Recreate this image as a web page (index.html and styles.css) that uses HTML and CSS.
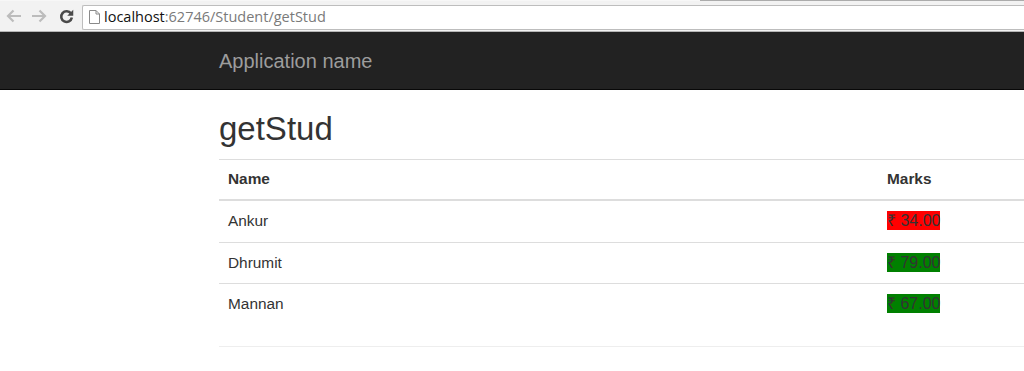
FILE: index.html
```html
<!DOCTYPE html>
<html lang="en">
<head>
    <meta charset="UTF-8">
    <meta name="viewport" content="width=device-width, initial-scale=1.0">
    <title>getStud - My ASP.NET Application</title>
    <link rel="stylesheet" href="styles.css">
</head>
<body>
    <div class="browser-bar">
        <div class="tab-edge"></div>
        <div class="toolbar">
            <span class="nav-btn disabled">
                <svg width="16" height="14" viewBox="0 0 16 14"><path d="M15 7H2.5M7.5 1.5L2 7l5.5 5.5" fill="none" stroke="currentColor" stroke-width="2.2"/></svg>
            </span>
            <span class="nav-btn disabled">
                <svg width="16" height="14" viewBox="0 0 16 14"><path d="M1 7h12.5M8.5 1.5L14 7l-5.5 5.5" fill="none" stroke="currentColor" stroke-width="2.2"/></svg>
            </span>
            <span class="nav-btn reload">
                <svg width="15" height="15" viewBox="0 0 14 14"><path d="M11.2 4.2A5 5 0 1 0 12 8" fill="none" stroke="currentColor" stroke-width="2.4"/><path d="M13.3 0.6V6.2H7.7z" fill="currentColor"/></svg>
            </span>
            <div class="omnibox">
                <svg class="page-icon" width="11" height="14" viewBox="0 0 11 14"><path d="M0.5 0.5h6.5l3.5 3.5v9.5h-10z M7 0.5v3.5h3.5" fill="#fff" stroke="#8a8a8a" stroke-width="1"/></svg>
                <span class="url"><span class="host">localhost</span>:62746/Student/getStud</span>
            </div>
        </div>
    </div>

    <div class="navbar">
        <a class="navbar-brand" href="#">Application name</a>
    </div>

    <div class="container body-content">
        <h2>getStud</h2>

        <table class="table">
            <thead>
                <tr>
                    <th class="col-name">Name</th>
                    <th>Marks</th>
                </tr>
            </thead>
            <tbody>
                <tr>
                    <td>Ankur</td>
                    <td><span class="mark low">₹ 34.00</span></td>
                </tr>
                <tr>
                    <td>Dhrumit</td>
                    <td><span class="mark high">₹ 79.00</span></td>
                </tr>
                <tr>
                    <td>Mannan</td>
                    <td><span class="mark high">₹ 67.00</span></td>
                </tr>
            </tbody>
        </table>

        <hr>
    </div>
</body>
</html>
```

FILE: styles.css
```css
* {
    margin: 0;
    padding: 0;
    box-sizing: border-box;
}

html, body {
    overflow: hidden;
}

body {
    font-family: 'Liberation Sans', Arial, sans-serif;
    font-size: 15.4px;
    line-height: 22px;
    color: #333;
    background-color: #fff;
}

/* browser chrome */
.browser-bar {
    height: 32px;
    background-color: #f2f2f2;
    border-bottom: 1px solid #b5b5b5;
}

.tab-edge {
    height: 1px;
    background: linear-gradient(to right, #f7f7f7 700px, #ababab 700px);
}

.toolbar {
    display: flex;
    align-items: center;
    height: 30px;
    padding-left: 5px;
}

.nav-btn {
    display: flex;
    align-items: center;
    justify-content: center;
    width: 18px;
    height: 24px;
    margin-right: 7px;
}

.nav-btn.disabled {
    color: #bcbcbc;
}

.nav-btn.reload {
    color: #4a4a4a;
    margin-left: 2px;
    margin-right: 7px;
}

.omnibox {
    flex: 1;
    display: flex;
    align-items: center;
    height: 25px;
    margin-top: 2px;
    background-color: #fff;
    border: 1px solid #bdbdbd;
    border-right: none;
    border-radius: 2px 0 0 2px;
    padding-left: 6px;
}

.page-icon {
    margin-right: 4px;
}

.url {
    font-family: 'Open Sans', 'Liberation Sans', sans-serif;
    font-size: 14.5px;
    color: #7a7a7a;
    line-height: 20px;
}

.url .host {
    color: #111;
}

/* site navbar */
.navbar {
    height: 58px;
    background-color: #222;
    border-bottom: 1px solid #080808;
    padding-left: 219px;
    display: flex;
    align-items: center;
}

.navbar-brand {
    font-size: 20px;
    color: #9d9d9d;
    text-decoration: none;
    line-height: 24px;
}

/* content */
.container {
    margin-left: 219px;
}

h2 {
    font-size: 33px;
    font-weight: 500;
    line-height: 36px;
    margin-top: 21px;
    margin-bottom: 12px;
}

.table {
    width: 100%;
    border-collapse: collapse;
    margin-bottom: 21px;
}

.table th,
.table td {
    text-align: left;
    padding: 9px;
    border-top: 1px solid #ddd;
    vertical-align: top;
}

.table td {
    padding-bottom: 9.5px;
}

.table th {
    font-weight: bold;
    padding-top: 8px;
    padding-bottom: 9px;
    border-bottom: 2px solid #ddd;
}

.table .col-name {
    width: 659px;
}

.mark {
    font-size: 16px;
    padding: 1px 0;
}

.mark.low {
    background-color: red;
}

.mark.high {
    background-color: green;
}

hr {
    border: 0;
    border-top: 1px solid #eee;
}
```
